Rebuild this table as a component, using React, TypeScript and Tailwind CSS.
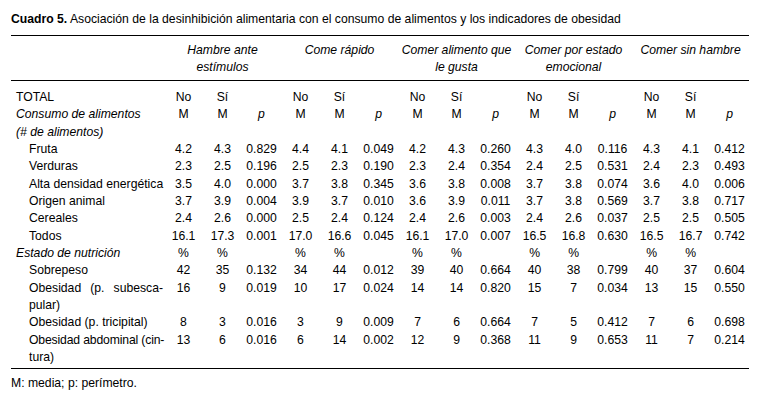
import React from "react";

const consumo: [string, string[]][] = [
  ["Fruta", ["4.2", "4.3", "0.829", "4.4", "4.1", "0.049", "4.2", "4.3", "0.260", "4.3", "4.0", "0.116", "4.3", "4.1", "0.412"]],
  ["Verduras", ["2.3", "2.5", "0.196", "2.5", "2.3", "0.190", "2.3", "2.4", "0.354", "2.4", "2.5", "0.531", "2.4", "2.3", "0.493"]],
  ["Alta densidad energética", ["3.5", "4.0", "0.000", "3.7", "3.8", "0.345", "3.6", "3.8", "0.008", "3.7", "3.8", "0.074", "3.6", "4.0", "0.006"]],
  ["Origen animal", ["3.7", "3.9", "0.004", "3.9", "3.7", "0.010", "3.6", "3.9", "0.011", "3.7", "3.8", "0.569", "3.7", "3.8", "0.717"]],
  ["Cereales", ["2.4", "2.6", "0.000", "2.5", "2.4", "0.124", "2.4", "2.6", "0.003", "2.4", "2.6", "0.037", "2.5", "2.5", "0.505"]],
  ["Todos", ["16.1", "17.3", "0.001", "17.0", "16.6", "0.045", "16.1", "17.0", "0.007", "16.5", "16.8", "0.630", "16.5", "16.7", "0.742"]],
];

const groups = [
  ["Hambre ante", "estímulos"],
  ["Come rápido", ""],
  ["Comer alimento que", "le gusta"],
  ["Comer por estado", "emocional"],
  ["Comer sin hambre", ""],
];

function Nums({ vals, top }: { vals: string[]; top?: boolean }) {
  return (
    <>
      {vals.map((v, i) => (
        <td key={i} className={`text-center align-top p-0 whitespace-nowrap ${top ? "pt-[8px]" : ""}`}>
          {v}
        </td>
      ))}
    </>
  );
}

function JustLabel({ first, second }: { first: string; second: string }) {
  return (
    <td className="align-top p-0 pl-[18px] pr-[1px]">
      <span className="block whitespace-nowrap text-justify [text-align-last:justify]">{first}</span>
      <span className="block">{second}</span>
    </td>
  );
}

export default function App() {
  const rep = (a: string[]) => [...a, ...a, ...a, ...a, ...a];
  return (
    <div className="w-[764px] h-[406px] bg-white text-black [font-family:'Liberation_Sans',Arial,sans-serif] text-[12.2px] leading-[17.33px] pt-[11px] pl-[11px]">
      <div className="leading-[17px]">
        <span className="font-bold">Cuadro 5.</span> Asociación de la desinhibición alimentaria con el consumo de alimentos y los indicadores de obesidad
      </div>
      <table className="mt-[7px] w-[738px] table-fixed border-collapse border-y border-black">
        <colgroup>
          <col className="w-[153px]" />
          {Array.from({ length: 15 }).map((_, i) => (
            <col key={i} className="w-[39px]" />
          ))}
        </colgroup>
        <thead>
          <tr className="border-b border-black">
            <th className="p-0"></th>
            {groups.map((g, i) => (
              <th key={i} colSpan={3} className="p-0 pt-[6px] pb-[3.5px] align-top font-normal italic text-center whitespace-nowrap">
                {g[0]}
                <br />
                {g[1] || "\u00a0"}
              </th>
            ))}
          </tr>
        </thead>
        <tbody>
          <tr>
            <td className="align-top p-0 pl-[5px] pt-[8px]">TOTAL</td>
            <Nums vals={rep(["No", "Sí", ""])} top />
          </tr>
          <tr>
            <td className="align-top p-0 pl-[5px] italic whitespace-nowrap">
              Consumo de alimentos
              <br />
              (# de alimentos)
            </td>
            {rep(["M", "M", "p"]).map((v, i) => (
              <td key={i} className={`text-center align-top p-0 ${v === "p" ? "italic" : ""}`}>
                {v}
              </td>
            ))}
          </tr>
          {consumo.map(([l, v]) => (
            <tr key={l}>
              <td className="align-top p-0 pl-[18px] whitespace-nowrap">{l}</td>
              <Nums vals={v} />
            </tr>
          ))}
          <tr>
            <td className="align-top p-0 pl-[5px] italic whitespace-nowrap">Estado de nutrición</td>
            <Nums vals={rep(["%", "%", ""])} />
          </tr>
          <tr>
            <td className="align-top p-0 pl-[18px] whitespace-nowrap">Sobrepeso</td>
            <Nums vals={["42", "35", "0.132", "34", "44", "0.012", "39", "40", "0.664", "40", "38", "0.799", "40", "37", "0.604"]} />
          </tr>
          <tr>
            <JustLabel first="Obesidad (p. subesca-" second="pular)" />
            <Nums vals={["16", "9", "0.019", "10", "17", "0.024", "14", "14", "0.820", "15", "7", "0.034", "13", "15", "0.550"]} />
          </tr>
          <tr>
            <td className="align-top p-0 pl-[18px] whitespace-nowrap">Obesidad (p. tricipital)</td>
            <Nums vals={["8", "3", "0.016", "3", "9", "0.009", "7", "6", "0.664", "7", "5", "0.412", "7", "6", "0.698"]} />
          </tr>
          <tr>
            <td className="align-top p-0 pl-[18px] pr-[1px] pb-[2px]">
              <span className="block whitespace-nowrap text-justify [text-align-last:justify] tracking-[-0.15px]">Obesidad abdominal (cin-</span>
              <span className="block">tura)</span>
            </td>
            <Nums vals={["13", "6", "0.016", "6", "14", "0.002", "12", "9", "0.368", "11", "9", "0.653", "11", "7", "0.214"]} />
          </tr>
        </tbody>
      </table>
      <div className="mt-[6px]">M: media; p: perímetro.</div>
    </div>
  );
}
